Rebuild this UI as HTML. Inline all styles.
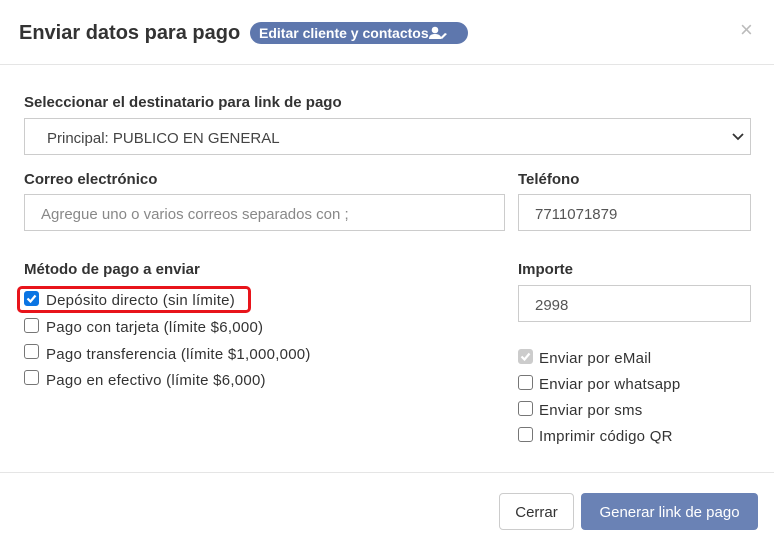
<!DOCTYPE html><html><head><style>
body{margin:0;width:774px;height:546px;background:#fff;font-family:"Liberation Sans",sans-serif;color:#333;position:relative;overflow:hidden}
.a{position:absolute;white-space:nowrap}
.lb{font-weight:bold;font-size:15px;color:#333}
.in{position:absolute;border:1px solid #ccc;box-sizing:border-box;font-size:15px;color:#555;padding-left:16px;padding-top:3px;display:flex;align-items:center}
.cb{position:absolute;width:15px;height:15px;border:1px solid #767676;border-radius:3px;background:#fff;box-sizing:border-box}
.ct{position:absolute;font-size:15px;color:#333;white-space:nowrap;letter-spacing:0.25px}
</style></head><body>
<div class="a" style="left:19px;top:22px;font-size:20px;font-weight:bold;color:#333">Enviar datos para pago</div>
<div class="a" style="left:250px;top:22px;width:218px;height:22px;background:#5e77ad;border-radius:11px;color:#fff;font-weight:bold;font-size:14px;line-height:22px;padding-left:9px;box-sizing:border-box">Editar cliente y contactos<svg width="20" height="14" viewBox="0 0 20 14" style="vertical-align:-2px"><circle cx="6" cy="4" r="3.3" fill="#fff"/><path d="M0 13c0-4 3-5 6-5s5 1 6 3v2z" fill="#fff"/><path d="M11 12l5-5 2 1-5 5z" fill="#fff"/></svg></div>
<div class="a" style="left:740px;top:17px;font-size:22px;color:#bbb">×</div>
<div class="a" style="left:0;top:64px;width:774px;height:1px;background:#e5e5e5"></div>
<div class="a lb" style="left:24px;top:94px">Seleccionar el destinatario para link de pago</div>
<div class="in" style="left:24px;top:118px;width:727px;height:37px;padding-left:22px;color:#444">Principal: PUBLICO EN GENERAL<svg style="position:absolute;right:6px;top:14px" width="12" height="8" viewBox="0 0 12 8"><path d="M1 1l5 5 5-5" stroke="#333" stroke-width="1.8" fill="none"/></svg></div>
<div class="a lb" style="left:24px;top:171px">Correo electrónico</div>
<div class="a lb" style="left:518px;top:171px">Teléfono</div>
<div class="in" style="left:24px;top:194px;width:481px;height:37px;color:#888">Agregue uno o varios correos separados con ;</div>
<div class="in" style="left:518px;top:194px;width:233px;height:37px">7711071879</div>
<div class="a lb" style="left:24px;top:261px">Método de pago a enviar</div>
<div class="a lb" style="left:518px;top:261px">Importe</div>
<div class="in" style="left:518px;top:285px;width:233px;height:37px">2998</div>
<div class="a" style="left:17px;top:286px;width:234px;height:27px;border:3px solid #e8141b;border-radius:5px;box-sizing:border-box"></div>
<div class="cb" style="left:24px;top:291px;background:#0b75e3;border-color:#0b75e3"><svg width="13" height="13" viewBox="0 0 13 13" style="position:absolute;left:0;top:0"><path d="M2.5 6.5l3 3 5-6" stroke="#fff" stroke-width="2.2" fill="none"/></svg></div>
<div class="ct" style="left:46px;top:292px">Depósito directo (sin límite)</div>
<div class="cb" style="left:24px;top:318px"></div><div class="ct" style="left:46px;top:319px">Pago con tarjeta (límite $6,000)</div>
<div class="cb" style="left:24px;top:344px"></div><div class="ct" style="left:46px;top:346px">Pago transferencia (límite $1,000,000)</div>
<div class="cb" style="left:24px;top:370px"></div><div class="ct" style="left:46px;top:372px">Pago en efectivo (límite $6,000)</div>
<div class="cb" style="left:518px;top:349px;background:#ccc;border-color:#ccc"><svg width="13" height="13" viewBox="0 0 13 13" style="position:absolute;left:0;top:0"><path d="M2.5 6.5l3 3 5-6" stroke="#fff" stroke-width="2.2" fill="none"/></svg></div>
<div class="ct" style="left:539px;top:350px">Enviar por eMail</div>
<div class="cb" style="left:518px;top:375px"></div><div class="ct" style="left:539px;top:376px">Enviar por whatsapp</div>
<div class="cb" style="left:518px;top:401px"></div><div class="ct" style="left:539px;top:402px">Enviar por sms</div>
<div class="cb" style="left:518px;top:427px"></div><div class="ct" style="left:539px;top:428px">Imprimir código QR</div>
<div class="a" style="left:0;top:472px;width:774px;height:1px;background:#e5e5e5"></div>
<div class="a" style="left:499px;top:493px;width:75px;height:37px;border:1px solid #ccc;border-radius:4px;box-sizing:border-box;font-size:15px;text-align:center;line-height:37px">Cerrar</div>
<div class="a" style="left:581px;top:493px;width:177px;height:37px;background:#6a82b5;border-radius:4px;color:#fff;font-size:15px;text-align:center;line-height:39px">Generar link de pago</div>
</body></html>
